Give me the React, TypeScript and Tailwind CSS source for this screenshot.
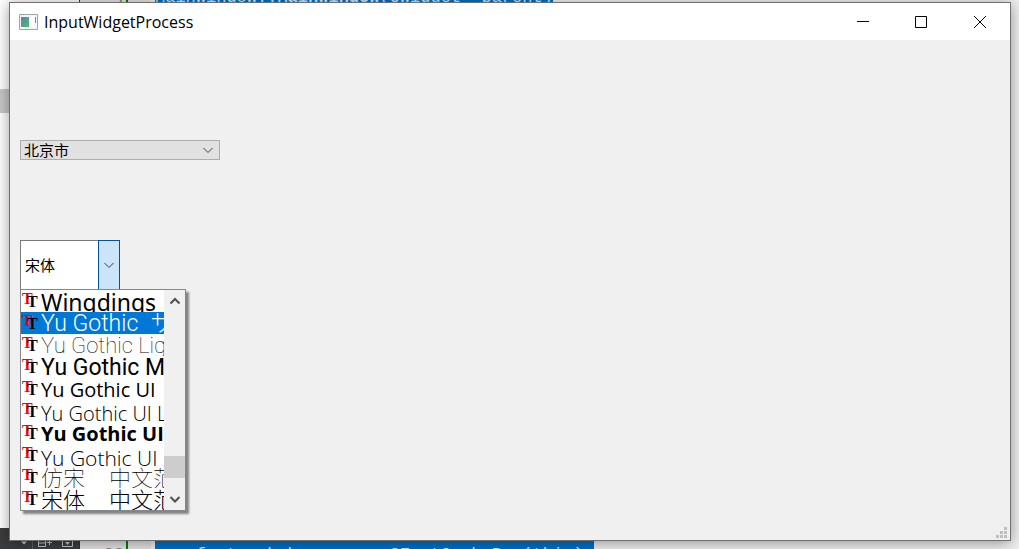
import { useState } from 'react'

const fonts = [
	{ name: 'Wingdings', style: "font-['Noto_Sans'] text-[23px] leading-6" },
	{
		name: 'Yu Gothic',
		sample: 'サンプル',
		style: "gap-3 font-['Roboto','Noto_Sans_CJK_JP',sans-serif] text-[23px] leading-6 font-light",
	},
	{
		name: 'Yu Gothic Light',
		style: "font-['Roboto',sans-serif] text-[22px] leading-6 font-thin",
	},
	{
		name: 'Yu Gothic Medium',
		style: "font-['Roboto',sans-serif] text-[23px] leading-6",
	},
	{
		name: 'Yu Gothic UI',
		style: "font-['Open_Sans',sans-serif] text-[20px] leading-6",
	},
	{
		name: 'Yu Gothic UI Light',
		style: "font-['Open_Sans',sans-serif] text-[20px] leading-7 font-light",
	},
	{
		name: 'Yu Gothic UI Semibold',
		style: "font-['Open_Sans',sans-serif] text-[20px] leading-6 font-bold",
	},
	{
		name: 'Yu Gothic UI Semilight',
		style: "font-['Open_Sans',sans-serif] text-[21px] leading-7 font-light",
	},
	{
		name: '仿宋',
		sample: '中文范例',
		style: "gap-6 font-['Noto_Sans_CJK_SC',sans-serif] text-[22px] leading-5 font-thin",
	},
	{
		name: '宋体',
		sample: '中文范例',
		style: "gap-6 font-['Noto_Sans_CJK_SC',sans-serif] text-[22px] leading-5 font-light",
	},
]

const Chevron = ({ className, up = false }: { className: string; up?: boolean }) => (
	<svg viewBox="0 0 12 12" fill="none" stroke="currentColor" className={className} aria-hidden="true">
		<path d={up ? 'M1.5 8.5 6 4 10.5 8.5' : 'M1.5 4 6 8.5 10.5 4'} />
	</svg>
)

const TrueTypeIcon = () => (
	<svg viewBox="0 0 18 22" className="w-[18px] h-[22px] shrink-0" aria-hidden="true">
		<g fontFamily="Liberation Serif, serif" fontWeight="bold" fontSize="16">
			<text x="1" y="14" fill="#ff0000">
				T
			</text>
			<text x="6" y="17" fill="currentColor">
				T
			</text>
		</g>
	</svg>
)

const Backdrop = () => (
	<div className="absolute inset-0 flex bg-[#f0f0f0]" aria-hidden="true">
		<div className="w-20 shrink-0 flex flex-col bg-white border-r border-[#303030]">
			<div className="mt-[89px] h-6 bg-[#c8c8c8]" />
			<div className="mt-auto h-[21px] bg-[#3c3d3f] text-[#c8c8c8]">
				<svg viewBox="0 0 80 21" className="w-20 h-[21px]" fill="none" stroke="currentColor">
					<path d="M21 13.5h6l-3 3z" fill="currentColor" stroke="none" />
					<path d="M32.5 0v21" stroke="#606060" />
					<path d="M38.5 11.5h7v7h-7zM38.5 15h7M47 14.5h5M49.5 12v5M62.5 11.5h10v7h-10z" />
					<path d="M65 14h5l-2.5 3z" fill="currentColor" stroke="none" />
				</svg>
			</div>
		</div>
		<div className="w-12 shrink-0 flex flex-col justify-between items-end bg-[#e4e4e4] border-r-2 border-[#008000] pr-0.5 font-['Liberation_Mono'] text-[17px] text-[#808080]">
			<div className="-mt-3 leading-5">4</div>
			<div className="-mb-4 leading-5">22</div>
		</div>
		<div className="w-[23px] shrink-0 bg-[#e4e4e4]" />
		<div className="flex-1 flex flex-col justify-between items-start pl-1 font-['Liberation_Mono'] text-[17px] leading-5 text-[#d8e8f8] whitespace-pre">
			<div className="-mt-3 bg-[#0070c8]">
				MainWindow::<b>MainWindow</b>(QWidget *parent)
			</div>
			<div className="-mb-4 pt-1 bg-[#0070c8]">{'    fontcombobox = new QFontComboBox(this);'}</div>
		</div>
	</div>
)

const TitleBar = () => (
	<header className="h-[37px] shrink-0 bg-white flex items-center">
		<svg viewBox="0 0 19 16" className="ml-[9px] w-[19px] h-4" aria-hidden="true">
			<defs>
				<linearGradient id="pane" x2="1" y2="1">
					<stop stopColor="#4f86b5" />
					<stop offset="1" stopColor="#58b868" />
				</linearGradient>
			</defs>
			<path d="M.5.5h18v15H.5z" fill="#f4f6f8" stroke="#a0a4aa" />
			<path d="M2 3h8v10H2z" fill="url(#pane)" />
			<path d="M11 3h4v10h-4z" fill="#fff" />
			<path d="M16 3h1v6h-1z" fill="#5a9a94" />
		</svg>
		<h1 className="ml-1.5 font-['Open_Sans'] text-[16px] leading-5 text-black">InputWidgetProcess</h1>
		<div className="ml-auto flex text-black">
			<button type="button" aria-label="Minimize" className="w-[58px] h-9 flex items-center justify-center">
				<svg viewBox="0 0 12 12" className="w-3 h-3" stroke="currentColor">
					<path d="M0 5.5h12" />
				</svg>
			</button>
			<button type="button" aria-label="Maximize" className="w-[58px] h-9 flex items-center justify-center">
				<svg viewBox="0 0 12 12" className="w-3 h-3" stroke="currentColor" fill="none">
					<path d="M.5.5h11v11H.5z" />
				</svg>
			</button>
			<button type="button" aria-label="Close" className="w-[60px] h-9 flex items-center justify-center">
				<svg viewBox="0 0 12 12" className="w-3 h-3" stroke="currentColor">
					<path d="m0 0 12 12M12 0 0 12" />
				</svg>
			</button>
		</div>
	</header>
)

const FontComboBox = () => {
	const [open, setOpen] = useState(true)
	const [font, setFont] = useState('宋体')
	const [current, setCurrent] = useState('Yu Gothic')

	const pick = (name: string) => {
		setCurrent(name)
		setFont(name)
		setOpen(false)
	}

	return (
		<div className="relative w-[100px] h-[50px] flex">
			<input
				type="text"
				aria-label="Font"
				value={font}
				onChange={e => setFont(e.target.value)}
				className="flex-1 min-w-0 bg-white border border-r-0 border-[#7a7a7a] pl-1 font-['Noto_Sans_CJK_SC',sans-serif] text-[15px] text-black outline-none"
			/>
			<button
				type="button"
				aria-label="Show fonts"
				aria-expanded={open}
				onClick={() => setOpen(!open)}
				className="w-[22px] bg-[#cce4f7] border border-[#005499] text-[#404040] flex items-center justify-center"
			>
				<Chevron className="w-3 h-3" />
			</button>
			{open && (
				<div className="absolute left-0 top-[49px] w-[166px] flex bg-white border border-[#828790] shadow-[3px_3px_2px_rgba(0,0,0,0.45)]">
					<ul role="listbox" aria-label="Fonts" className="flex-1 min-w-0 text-black">
						{fonts.map(f => (
							<li
								key={f.name}
								role="option"
								aria-selected={f.name === current}
								onClick={() => pick(f.name)}
								className={`h-[22px] flex overflow-hidden ${f.name === current ? 'bg-[#0078d7]' : ''}`}
							>
								<TrueTypeIcon />
								<span
									className={`ml-0.5 flex-1 flex overflow-hidden whitespace-nowrap ${f.style} ${f.name === current ? 'text-white' : ''}`}
								>
									<span>{f.name}</span>
									{f.sample && <span>{f.sample}</span>}
								</span>
							</li>
						))}
					</ul>
					<div className="w-[21px] flex flex-col bg-[#f0f0f0] text-[#505050]">
						<button type="button" aria-label="Scroll up" className="h-[22px] flex items-center justify-center">
							<Chevron up className="w-3 h-3 stroke-2" />
						</button>
						<div className="flex-1 flex flex-col justify-end pb-2.5">
							<div className="h-[22px] bg-[#cdcdcd]" />
						</div>
						<button type="button" aria-label="Scroll down" className="h-[22px] flex items-center justify-center">
							<Chevron className="w-3 h-3 stroke-2" />
						</button>
					</div>
				</div>
			)}
		</div>
	)
}

const App = () => {
	return (
		<div className="relative h-screen overflow-hidden flex pt-0.5 pl-[9px] pr-2 pb-2">
			<Backdrop />
			<main className="relative flex-1 flex flex-col bg-[#f0f0f0] border border-[#707070] shadow-[0_2px_14px_rgba(0,0,0,0.4)]">
				<TitleBar />
				<div className="flex-1 flex flex-col items-start gap-20 pt-[100px] pl-2.5">
					<div className="relative w-[200px]">
						<select
							aria-label="City"
							className="block w-full h-5 appearance-none bg-[#e1e1e1] border border-[#adadad] pl-[3px] pr-6 font-['Noto_Sans_CJK_SC',sans-serif] text-[15px] leading-[18px] text-black"
						>
							<option>北京市</option>
						</select>
						<Chevron className="absolute right-1.5 top-1 w-3 h-3 text-[#404040] pointer-events-none" />
					</div>
					<FontComboBox />
				</div>
				<svg viewBox="0 0 11 11" className="absolute right-[3px] bottom-0.5 w-[11px] h-[11px]" fill="#bfbfbf">
					<path d="M8 0h3v3H8zM4 4h3v3H4zM8 4h3v3H8zM0 8h3v3H0zM4 8h3v3H4zM8 8h3v3H8z" />
				</svg>
			</main>
		</div>
	)
}

export default App
